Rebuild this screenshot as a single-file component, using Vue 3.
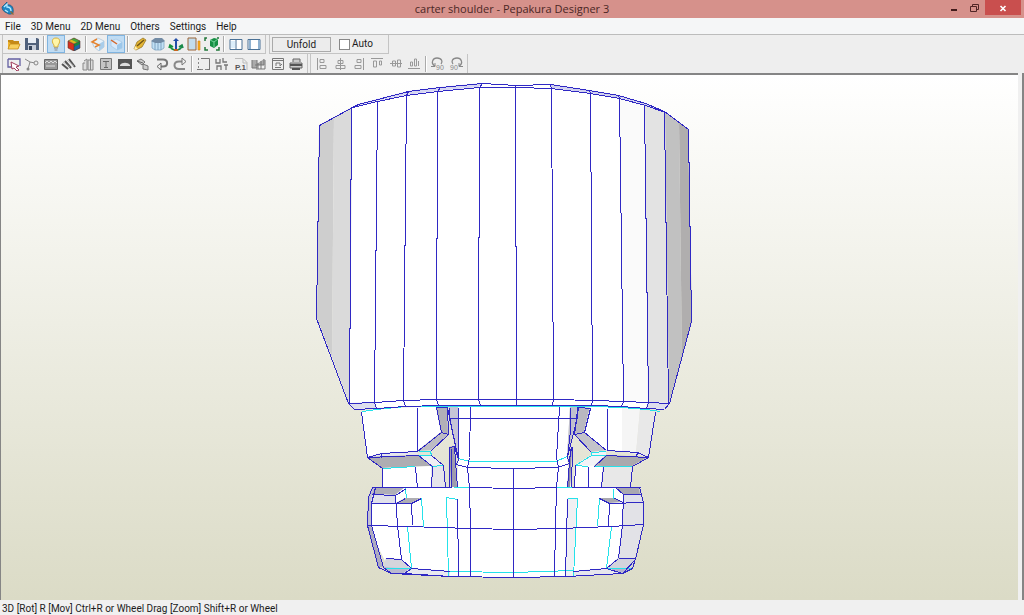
<script setup>
import { ref } from 'vue'

const auto = ref(false)
const menus = ['File', '3D Menu', '2D Menu', 'Others', 'Settings', 'Help']

const mainGroups = [
  [
    { name: 'Open', art: '<path d="M2 3h5l1 1h5v3H2z" fill="#c58a16"/><path d="M2 12V5h1l2 2h9l-2 5z" fill="#f0b52c"/><path d="M2 12l2-5h10l-2 5z" fill="#f7cf5c" stroke="#c58a16" stroke-width=".8"/>' },
    { name: 'Save', art: '<path d="M1 1h12l2 1v11H1z" fill="#50617b"/><path d="M4 1h8v5H4z" fill="#e8edf4"/><path d="M4 8h8v5H4z" fill="#c5ccd8"/><path d="M5 9h3v4H5z" fill="#34435a"/>' },
  ],
  [
    { name: 'Light', on: true, art: '<path d="M8 1C3 1 4 6 6 8v2h4V8c2-2 3-7-2-7z" fill="#fff6a8" stroke="#d8b13c"/><path d="M6 11h4M6.500 13h3" stroke="#8a8a8a" stroke-width="1.200"/>' },
    { name: 'Texture', art: '<path d="M8 1l6 3-6 3-6-3z" fill="#e0b81e"/><path d="M8 1l6 3-3 1.500-6-3z" fill="#45a83a"/><path d="M2 4l6 3v7l-6-3z" fill="#d8301c"/><path d="M14 4L8 7v7l6-3z" fill="#178a3c"/><path d="M8 10l6-3v4l-6 3z" fill="#1f64a8"/><path d="M8 1l6 3v7l-6 3-6-3V4zM2 4l6 3 6-3M8 7v7" fill="none" stroke="#533" stroke-width=".6"/>' },
  ],
  [
    { name: 'Edges', art: '<path d="M2 5l6-4 6 3v6l-5 4-5-4z" fill="#e7f1f9" stroke="#a9c0d4" stroke-width=".7"/><path d="M9 7l5-3v6l-5 4z" fill="#a9cdea"/><path d="M7 2L2 5l7 3-4 2" fill="none" stroke="#e4822e" stroke-width="1.500"/>' },
    { name: 'Fold lines', on: true, art: '<path d="M3 4l5-2 6 3v6l-5 2-6-4z" fill="#d6e9fa" stroke="#a4c6e2" stroke-width=".7"/><path d="M9 8l5-3v6l-5 2z" fill="#9cc7ea"/><path d="M3 3l6 4" stroke="#d4672c" stroke-width="1.500"/>' },
  ],
  [
    { name: 'Mark edge', art: '<path d="M2 12l3-7 6-4 3 2-4 7-6 3z" fill="#e5b634" stroke="#8d6c18" stroke-width=".7"/><path d="M5 9l7-6" stroke="#705516" stroke-width="1.500"/><path d="M2 13l1-4 3 3z" fill="#fff0b5"/>' },
    { name: 'Solid', art: '<path d="M2 4v7l3 2h6l3-2V4z" fill="#c2e1f5" stroke="#7fa3c2" stroke-width=".8"/><path d="M1 4l4-3h7l3 3-4 2H5z" fill="#728ba5"/><path d="M5 6v7M8 6v7M11 6v7" stroke="#7fa3c2"/>' },
    { name: 'Axes', art: '<path d="M8 2v10" stroke="#234ea8" stroke-width="2"/><path d="M5 4l3-3 3 3z" fill="#234ea8"/><path d="M8 13c-3 0-5-1-6-4M1 11l1-3 3 2" fill="none" stroke="#15913d" stroke-width="1.600"/><path d="M8 13c3 0 5-1 6-4M11 10l3-2 1 3" fill="none" stroke="#188a4a" stroke-width="1.600"/><path d="M6 12h4v2H6z" fill="#c86420"/>' },
    { name: 'Measure', art: '<path d="M2 1h8v12H2z" fill="#c3dced" stroke="#9b6536"/><path d="M12 4h2v9h-2z" fill="#ffb11b" stroke="#ce7d18" stroke-width=".6"/>' },
    { name: 'Fit', art: '<path d="M1 4V1h2M13 1h2M1 10v3h3M12 13h3v-3" fill="none" stroke="#20773a" stroke-width="1.500"/><path d="M6 3l4-2 4 1v6l-4 3-4-2z" fill="#168f44"/><path d="M6 3l4 2 4-3M10 5v5" fill="none" stroke="#74d39a"/>' },
  ],
  [
    { name: 'Split view', art: '<path d="M2 2.500h12v10H2z" fill="#fff" stroke="#4a7196"/><path d="M8 3v9" stroke="#4a7196"/><path d="M3 4h4v7H3z" fill="#dceefa"/>' },
    { name: 'Side view', art: '<path d="M2 2.500h12v10H2z" fill="#fff" stroke="#4a7196"/><path d="M3 3h2v9H3zM12 3h2v9h-2z" fill="#8fb1d0"/>' },
  ],
]

const editGroups = [
  { size: 'ten', items: [
    { name: 'Select and move', art: '<path d="M2 2h12v7M2 2v8h4" fill="none" stroke="#6460a2" stroke-width="1.300"/><path d="M5 5l8 4-3 1 3 3-2 1-3-3-2 1z" fill="#fff" stroke="#a13a5a"/>' },
    { name: 'Join faces', art: '<path d="M1 2l5 3-2 7M6 5l5 1" fill="none" stroke="#888"/><circle cx="12" cy="6" r="2" fill="#eee" stroke="#888"/><circle cx="4" cy="12" r="1.500" fill="#888"/>' },
    { name: 'Edit flaps', art: '<path d="M1.500 2.500h13v10h-13z" fill="#999" stroke="#666"/><path d="M2 6l2-2 2 2 2-2 2 2 2-2 2 2M3 9h9" fill="none" stroke="#ddd"/>' },
    { name: 'Edge colour', art: '<path d="M1 7l6 5M4 4l6 7M8 2l6 8" stroke="#555" stroke-width="2"/><path d="M2 5l7 5M6 3l7 6" stroke="#aaa" stroke-width=".7"/>' },
    { name: 'Material', art: '<path d="M4 4l3-2v11H3V6h2M8 3h5v10H8zM10.500 1v12" fill="#ddd" stroke="#888"/>' },
    { name: 'Text', art: '<path d="M2.500 1.500h11v11h-11z" fill="#c4c4c4" stroke="#777"/><path d="M5 4.500h6M8 4v6M6 10.500h4" stroke="#666"/>' },
    { name: 'Image', art: '<path d="M1 2h14v10H1z" fill="#555"/><path d="M3 8c2-3 8-3 10 0v1H3z" fill="#ddd"/>' },
    { name: 'Rotate part', art: '<path d="M2 4l4-2 4 3-3 3zM8 7l5 2v4l-5-1z" fill="#ccc" stroke="#777"/><path d="M2 4l6 2" stroke="#666"/>' },
    { name: 'Undo', art: '<path d="M3 2.500h6c5.500 0 5.500 7 0 7H6" fill="none" stroke="#777" stroke-width="2"/><path d="M7 6v7L3 9.500z" fill="#eee" stroke="#666"/>' },
    { name: 'Redo', art: '<path d="M13 12H7C1 12 1 4.500 7 4.500h3" fill="none" stroke="#888" stroke-width="2"/><path d="M10 1v7l4-3.500z" fill="#eee" stroke="#777"/>' },
  ] },
  { size: 'six', items: [
    { name: 'Page bounds', art: '<path d="M2.500 1v10M5 12.500h6" stroke="#888" stroke-dasharray="2 2"/><path d="M5 1.500h8.500v11M1 12.500h4M11 12.500h3" fill="none" stroke="#777"/>' },
    { name: 'Arrange', art: '<path d="M2 2v4h4V2M9 1v4h4M3 13V9h4v4M10 8h4M12 8v5" fill="none" stroke="#777" stroke-width="1.300"/>' },
    { name: 'Page number', art: '<path d="M2 1.500h8l4 4V13M10 2v4h4" fill="none" stroke="#bbb"/><text x="2" y="13" font-family="Liberation Sans,sans-serif" font-size="8" font-weight="700" fill="#555">P.1</text>' },
    { name: 'Export', art: '<path d="M1 3v8h5V3M4 8h9V2M7 12V6M10 12V4M14 12V3M5 12h9" fill="#aaa" stroke="#777"/>' },
    { name: 'Preview', art: '<path d="M2.500 1.500h11v11h-11zM3 3.500h11M5 10.500h6" fill="none" stroke="#777"/><path d="M6 9V6h4v3l2-2" fill="none" stroke="#777"/>' },
    { name: 'Print', art: '<path d="M5 5V2h7v3M2 6h12v5H2z" fill="#ccc" stroke="#666"/><path d="M2 8h12M4 12h8" stroke="#555" stroke-width="2"/>' },
  ] },
]

const alignGroups = [
  { size: 'six', items: [
    { name: 'Align left', art: '<path d="M3.500 1v12M6 2.500h4v3H6zM6 8.500h6v3H6z" fill="none" stroke="#999"/>' },
    { name: 'Align centre', art: '<path d="M8.500 1v12M6 3.500h5v3H6zM4 8.500h9v3H4z" fill="none" stroke="#999"/>' },
    { name: 'Align right', art: '<path d="M12.500 1v12M6 2.500h4v3H6zM4 8.500h6v3H4z" fill="none" stroke="#999"/>' },
    { name: 'Align top', art: '<path d="M2 1.500h12M4.500 4v6h3V4zM10.500 4v4h2V4z" fill="none" stroke="#999"/>' },
    { name: 'Align middle', art: '<path d="M2 6.500h12M4.500 4v5h3V4zM9.500 3v7h3V3z" fill="none" stroke="#999"/>' },
    { name: 'Align bottom', art: '<path d="M2 11.500h12M4.500 5v4h2V5zM8.500 2v7h2V2zM12.500 4v5" fill="none" stroke="#999"/>' },
  ] },
  { size: 'two', items: [
    { name: 'Rotate left 90', art: '<path d="M5 9C0 6 3 1 7 1c5 0 6 4 4 6" fill="none" stroke="#888" stroke-width="1.300"/><path d="M1 9.500h4V6" fill="none" stroke="#888"/><text x="6" y="13" font-family="Liberation Sans,sans-serif" font-size="7" fill="#888">90</text>' },
    { name: 'Rotate right 90', art: '<path d="M11 9c5-3 2-8-2-8-5 0-6 4-4 6" fill="none" stroke="#888" stroke-width="1.300"/><path d="M11 6v3.500h4" fill="none" stroke="#888"/><text x="2" y="13" font-family="Liberation Sans,sans-serif" font-size="7" fill="#888">90</text>' },
  ] },
]

// Faces of the shaded model: [fill, points]
const faces = [
  ['#fff', '352,107 377,101 406,95 437,91 479,87 551,88 590,93 619,98 645,105 665,112 669,403 664,409 593,405 438,405 354,409 349,403'],
  ['#cecece', '319,125 334,117 332,357 317,318'],
  ['#dadada', '334,117 352,107 351,256 349,403 332,357'],
  ['#d6d6f2', '352,107 358,104 408,91 440,87 482,83 479,87 437,91 406,95 377,101'],
  ['#fff', '482,83 516,85 550,84 551,88 479,87'],
  ['#d0d0ee', '550,84 589,90 618,95 645,103 664,111 645,105 619,98 590,93 551,88'],
  ['#fafafa', '619,98 645,105 648,402 623,401'],
  ['#e3e3e3', '645,105 665,112 669,403 648,402'],
  ['#c1c1c1', '665,112 679,122 682,357 669,403'],
  ['#b0aeae', '679,122 688,129 692,321 682,357'],
  ['#dedeed', '349,403 374,402 376,408 354,409'],
  ['#dedeed', '648,402 669,403 664,409 646,408'],
  ['#fff', '361,412 376,409 436,406 441,432 417,451 367,457'],
  ['#b1b0b8', '436,407 447,407 448,434 441,432'],
  ['#bdbcc4', '441,432 448,435 431,450 417,451'],
  ['#e7e7ed', '367,457 381,453 417,451 418,455'],
  ['#aeadb2', '367,457 418,455 432,466 382,468'],
  ['#efeff4', '418,455 431,455 443,465 432,466'],
  ['#fff', '382,468 431,466 431,487 382,487'],
  ['#e5e5eb', '431,466 443,465 445,487 431,487'],
  ['#fff', '458,406 570,406 567,457 571,487 457,487 458,459'],
  ['#c6c5d7', '449,407 458,407 458,459 449,418'],
  ['#9e9bad', '449,447 454,446 457,487 451,487'],
  ['#c0bfce', '570,407 577,407 576,420 567,457'],
  ['#8d88a6', '571,447 572,447 570,487 567,487'],
  ['#b9b8c0', '578,407 590,408 584,432 574,434'],
  ['#c4c3ca', '574,434 584,432 606,450 591,452'],
  ['#fff', '590,407 622,407 622,451 606,450 584,432'],
  ['#f5f5f5', '622,407 640,409 636,454 622,451'],
  ['#e8e8e8', '640,409 655,412 648,458 636,454'],
  ['#f3f3f7', '591,452 606,451 606,455 594,466 575,465 591,455'],
  ['#aaa9ad', '606,455 648,457 632,466 594,466'],
  ['#fff', '575,465 603,466 601,487 574,487'],
  ['#e8e8e8', '603,466 632,466 630,487 601,487'],
  ['#fff', '372,487 639,487 643,524 622,573 566,577 450,577 391,573 367,525'],
  ['#c2c0d4', '372,487 375,487 371,503 371,525 367,525 368,497'],
  ['#adabc0', '367,525 371,525 383,567 378,567'],
  ['#afaeb8', '375,487 405,487 395,495 372,494'],
  ['#e1e1eb', '372,494 395,495 396,503 371,503'],
  ['#aeadb3', '396,503 405,498 421,498 411,503'],
  ['#d5d5dc', '386,558 401,559 411,568 383,567'],
  ['#b9b8d0', '383,567 411,568 404,573 391,573'],
  ['#e9e9f0', '404,573 411,568 450,571 450,577'],
  ['#f0f0f3', '567,498 577,498 573,576 565,577'],
  ['#a8a7b1', '615,487 639,487 640,494 623,494'],
  ['#e0e0eb', '623,494 640,494 643,502 623,502'],
  ['#a9a8b0', '599,498 614,498 623,502 609,503'],
  ['#e2e2e7', '623,502 643,502 643,524 635,558 618,558 622,525'],
  ['#d3d3dc', '618,558 635,558 632,568 606,568'],
  ['#b5b3cf', '606,568 632,568 622,573'],
  ['#e6e6ed', '573,571 606,568 622,573 573,577'],
]

const edges = [
  '319,125 352,107 358,104 408,91 440,87 482,83 516,85 550,84 589,90 618,95 645,103 664,111 688,129 691,321 669,403 664,409',
  '352,107 377,101 406,95 437,91 479,87 515,87 551,88 590,93 619,98 645,105 665,112',
  '319,125 316,318 348,403 354,409', '351,107 350,256 349,403', '377,101 374,402 376,408',
  '406,95 403,400 405,406', '408,91 406,95', '440,87 437,91 436,399 438,405', '482,83 479,87 478,399 480,405',
  '515,85 516,405', '550,84 551,88 553,399 552,405', '589,90 590,93 592,400 591,405',
  '618,95 619,98 623,401 621,406', '644,105 648,402 646,408', '664,112 668,403',
  '349,403 374,402 403,400 437,399 554,399 593,400 623,401 648,402 669,403',
  '354,409 376,408 405,406 438,405 593,405 621,406 646,408 664,409',
  '361,412 367,457 381,453 417,451', '381,453 381,457', '417,407 417,451', '367,457 418,455 432,466 431,487',
  '367,457 382,468 382,487', '436,407 441,432 417,451', '436,407 447,407 448,434 431,450', '441,432 448,434',
  '415,467 417,487', '431,455 443,465 445,487', '449,407 449,418 458,459 456,464 467,467', '458,407 458,459',
  '447,407 458,459', '449,487 449,447 454,446 458,459', '454,447 457,487', '451,448 451,487',
  '470,407 469,457 467,467 469,487 470,528 470,576', '449,418 577,418', '467,467 513,468 557,467',
  '559,407 556,457 558,467 556,487 555,525 554,576', '570,407 570,430 567,457 569,463 557,467',
  '577,407 576,420 567,457', '569,460 571,447 572,447 571,487', '570,449 567,487', '513,468 513,576',
  '578,407 574,434 591,452', '590,408 584,432 606,450', '574,434 584,432', '578,407 590,408',
  '607,408 607,450 637,452 648,457 655,412', '637,452 636,456', '606,455 648,457 632,466 630,487', '606,455 594,466',
  '575,465 574,487', '588,466 588,487', '603,467 601,487', '372,487 450,487', '470,487 513,488 556,487', '571,487 640,487',
  '372,487 368,497 367,525 378,567 391,573 450,576 513,577 566,576 622,573 635,559 643,524 643,502 639,487',
  '375,487 371,503 371,525 383,567', '372,494 395,495 406,488', '371,503 411,503 421,498', '395,495 397,525 401,559 411,568',
  '411,503 412,525', '396,503 405,498', '367,525 407,526 470,528 513,529 560,528 610,526 643,524',
  '457,499 458,576', '386,558 401,559', '383,567 391,573 404,573 411,568 450,571', '404,573 450,576',
  '615,487 623,494 640,494', '623,494 622,525 618,558 606,568', '599,498 609,503 643,502', '609,503 608,526',
  '614,498 623,502', '618,558 635,558', '573,571 606,568 622,573', '635,558 632,568 622,573', '567,499 565,576',
]

const openEdges = [
  '362,411 376,409 405,406 438,406 593,406 621,407 646,409 660,411', '418,451 430,451 431,455 418,455',
  '382,468 415,466', '431,466 443,465', '458,458 469,461 555,461 567,456', '453,487 470,487',
  '591,452 606,451', '606,455 591,455 575,465', '591,452 591,455', '575,465 588,466', '594,466 632,466', '556,487 571,487',
  '405,488 406,498', '421,498 423,526 412,526', '407,526 411,568 383,568', '448,576 446,497 457,499',
  '450,571 513,572 573,570', '567,498 577,498 573,576', '599,498 597,526', '613,488 613,498', '611,526 606,568 632,568',
]
</script>

<template>
  <div class="window">
    <header class="titlebar">
      <svg class="logo" viewBox="0 0 16 16" aria-hidden="true">
        <path d="M2 7l5-5v3c5-1 7 3 6 8-1 1-4 2-6 0-3-1-5-3-5-6z" fill="#1f86c4" stroke="#15547d" stroke-width=".7" />
        <path d="M4 7l3-3v3c3 0 4 2 4 4M5 10l3 2" fill="none" stroke="#b5eaff" stroke-width="1.300" />
        <path d="M10 12l3 3 1-1-3-3z" fill="#8b6c39" />
      </svg>
      <h1>carter shoulder - Pepakura Designer 3</h1>
      <div class="controls">
        <button type="button" aria-label="Minimize"><svg viewBox="0 0 12 12"><path d="M3 8h6" stroke="#421b1b" stroke-width="2" /></svg></button>
        <button type="button" aria-label="Restore"><svg viewBox="0 0 12 12"><path d="M3.500 4V2.500h6v5H8M1.500 4.500H7.500v5h-6z" fill="none" stroke="#512626" /></svg></button>
        <button type="button" class="close" aria-label="Close"><svg viewBox="0 0 12 12"><path d="M3.500 4l5 5M8.500 4l-5 5" stroke="#fff" stroke-width="1.600" /></svg></button>
      </div>
    </header>

    <nav class="menubar">
      <button v-for="m in menus" :key="m" type="button">{{ m }}</button>
    </nav>

    <div class="dock">
      <div class="row">
        <div class="bar">
          <template v-for="(group, g) in mainGroups" :key="g">
            <span v-if="g" class="sep"></span>
            <button v-for="tool in group" :key="tool.name" type="button" class="tool" :class="{ on: tool.on }" :aria-label="tool.name">
              <svg viewBox="0 0 16 14" v-html="tool.art"></svg>
            </button>
          </template>
        </div>
        <div class="bar unfold-bar">
          <button type="button" class="unfold">Unfold</button>
          <label class="auto"><input v-model="auto" type="checkbox" />Auto</label>
        </div>
      </div>
      <div class="row">
        <div class="bar">
          <template v-for="(group, g) in editGroups" :key="g">
            <span v-if="g" class="sep"></span>
            <div class="group" :class="group.size">
              <button v-for="tool in group.items" :key="tool.name" type="button" class="tool" :aria-label="tool.name">
                <svg viewBox="0 0 16 14" v-html="tool.art"></svg>
              </button>
            </div>
          </template>
        </div>
        <div class="bar align-bar">
          <template v-for="(group, g) in alignGroups" :key="g">
            <span v-if="g" class="sep"></span>
            <div class="group" :class="group.size">
              <button v-for="tool in group.items" :key="tool.name" type="button" class="tool" :aria-label="tool.name">
                <svg viewBox="0 0 16 14" v-html="tool.art"></svg>
              </button>
            </div>
          </template>
        </div>
      </div>
    </div>

    <main class="workspace">
      <div class="view">
        <svg class="model" viewBox="1 75 1017 525" role="img" aria-label="3D model">
          <polygon v-for="(f, i) in faces" :key="'f' + i" :fill="f[0]" :points="f[1]" />
          <g transform="translate(.5 .5)" fill="none">
            <polyline v-for="(e, i) in openEdges" :key="'o' + i" class="open" :points="e" />
            <polyline v-for="(e, i) in edges" :key="'e' + i" class="edge" :points="e" />
          </g>
        </svg>
      </div>
      <div class="second-view"></div>
    </main>

    <footer class="status">3D [Rot] R [Mov] Ctrl+R or Wheel Drag [Zoom] Shift+R or Wheel</footer>
  </div>
</template>

<style>
body { margin: 0; }
</style>

<style scoped>
.window {
  display: flex;
  flex-direction: column;
  height: 100vh;
  overflow: hidden;
  background: #eee;
  color: #1c1c1c;
  font: 10px/14px Roboto, "Noto Sans", sans-serif;
}
button {
  margin: 0;
  padding: 0;
  border: 0;
  background: none;
  color: inherit;
  font: inherit;
}
svg { display: block; }
.titlebar {
  display: grid;
  grid-template-columns: 1fr auto 1fr;
  flex: none;
  height: 18px;
  background: #d6918b;
}
.logo { width: 16px; height: 16px; }
h1 {
  margin: 0;
  color: #4b2725;
  font-family: "Open Sans", "Noto Sans", sans-serif;
  font-size: 11px;
  font-weight: 400;
  line-height: 18px;
}
.controls {
  display: flex;
  justify-content: flex-end;
  padding-right: 3px;
}
.controls button {
  display: grid;
  place-items: center;
  width: 21px;
  height: 15px;
}
.controls button.close {
  width: 36px;
  background: #c94f4e;
}
.controls svg { width: 12px; height: 12px; }
.menubar {
  display: flex;
  flex: none;
  gap: 10px;
  height: 16px;
  padding-left: 5px;
  border-bottom: 1px solid #bcbcbc;
  background: #f5f6f7;
  line-height: 18px;
}
.dock {
  flex: none;
  padding-left: 2px;
}
.row {
  display: flex;
  height: 19px;
}
.bar {
  display: flex;
  align-items: center;
  box-sizing: border-box;
  padding: 0 2px;
  border: 1px solid #c4c4c4;
  border-width: 0 1px 1px;
}
.row + .row .bar { border-bottom: 0; }
.tool {
  display: grid;
  place-items: center;
  flex: none;
  box-sizing: border-box;
  width: 18px;
  height: 18px;
}
.tool.on {
  border: 1px solid #80b4e0;
  background: #c0dcf3;
}
.tool svg { width: 16px; height: 14px; }
.sep {
  width: 2px;
  height: 16px;
  margin: 0 2px;
  box-sizing: border-box;
  border-left: 1px solid #aaa;
  border-right: 1px solid #fff;
}
.group {
  display: flex;
  justify-content: space-between;
}
.ten { width: 184px; }
.six { width: 110px; }
.two { width: 36px; }
.unfold-bar {
  gap: 8px;
  margin-left: 3px;
  padding-right: 15px;
}
.unfold {
  width: 59px;
  height: 15px;
  border: 1px solid #aaa;
  background: #ececec;
  line-height: 13px;
}
.auto {
  display: flex;
  align-items: center;
  gap: 2px;
}
.auto input {
  appearance: none;
  width: 11px;
  height: 11px;
  margin: 0;
  border: 1px solid #888;
  background: #fff;
}
.auto input:checked { background: #456; }
.align-bar { margin-left: 2px; }
.workspace {
  display: flex;
  flex: 1;
  gap: 4px;
  min-height: 0;
  background: #f0f0f0;
}
.view {
  flex: 1;
  min-width: 0;
  border-top: 2px solid #858585;
  border-left: 1px solid #858585;
  background: linear-gradient(#fff, #dbdbc6);
}
.model {
  width: 100%;
  height: 100%;
}
.edge {
  stroke: #2f28c4;
  stroke-width: 1;
  shape-rendering: crispEdges;
}
.open {
  stroke: #25e2ea;
  stroke-width: 1;
  shape-rendering: crispEdges;
}
.second-view {
  width: 2px;
  background: #858585;
}
.status {
  flex: none;
  height: 15px;
  padding-left: 2px;
  line-height: 18px;
  background: #f0f0f0;
}
</style>
